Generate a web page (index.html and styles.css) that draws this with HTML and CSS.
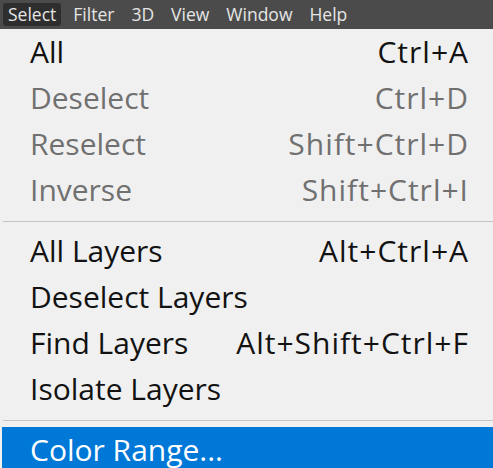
FILE: index.html
```html
<!DOCTYPE html>
<html>
<head>
<meta charset="utf-8">
<link rel="stylesheet" href="styles.css">
</head>
<body>
<div class="menubar">
  <span class="mb-item active">Select</span>
  <span class="mb-item">Filter</span>
  <span class="mb-item">3D</span>
  <span class="mb-item">View</span>
  <span class="mb-item">Window</span>
  <span class="mb-item">Help</span>
</div>
<div class="menu">
  <div class="group">
    <div class="row"><span>All</span><span class="key">Ctrl+A</span></div>
    <div class="row disabled"><span>Deselect</span><span class="key">Ctrl+D</span></div>
    <div class="row disabled"><span>Reselect</span><span class="key">Shift+Ctrl+D</span></div>
    <div class="row disabled"><span>Inverse</span><span class="key">Shift+Ctrl+I</span></div>
  </div>
  <div class="sep"></div>
  <div class="group">
    <div class="row"><span>All Layers</span><span class="key">Alt+Ctrl+A</span></div>
    <div class="row"><span>Deselect Layers</span><span></span></div>
    <div class="row"><span>Find Layers</span><span class="key">Alt+Shift+Ctrl+F</span></div>
    <div class="row"><span>Isolate Layers</span><span></span></div>
  </div>
  <div class="sep"></div>
  <div class="group">
    <div class="row hl"><span>Color Range...</span><span></span></div>
  </div>
</div>
</body>
</html>
```
FILE: styles.css
```css
html, body {
  margin: 0;
  padding: 0;
  background: #f0f0f0;
  overflow: hidden;
}
body {
  width: 493px;
  height: 468px;
  font-family: "Open Sans", "Noto Sans", sans-serif;
}
.menubar {
  height: 29px;
  background: #4b4b4b;
  display: flex;
  align-items: center;
  padding-left: 3px;
  gap: 7px;
  box-sizing: border-box;
}
.mb-item {
  color: #e6e6e6;
  font-size: 17.5px;
  line-height: 23px;
  padding: 0 5px;
  border-radius: 3px;
}
.mb-item.active {
  background: #2e2e2e;
}
.menu {
  display: flex;
  flex-direction: column;
}
.group {
  display: flex;
  flex-direction: column;
}
.row {
  height: 46px;
  display: flex;
  align-items: center;
  justify-content: space-between;
  padding: 0 25px 0 30px;
  font-size: 30px;
  line-height: 36px;
  color: #121212;
}
.key {
  letter-spacing: 1px;
  margin-right: -1px;
}
.row.disabled {
  color: #707070;
}
.row.hl {
  background: #0078d7;
  color: #ffffff;
  margin-left: 2px;
  padding-left: 28px;
  height: 41px;
  align-items: flex-start;
  padding-top: 6px;
  line-height: 34px;
  box-sizing: border-box;
}
.sep {
  height: 1px;
  background: #c4c4c4;
  margin: 8px 0 6px 3px;
}
```
